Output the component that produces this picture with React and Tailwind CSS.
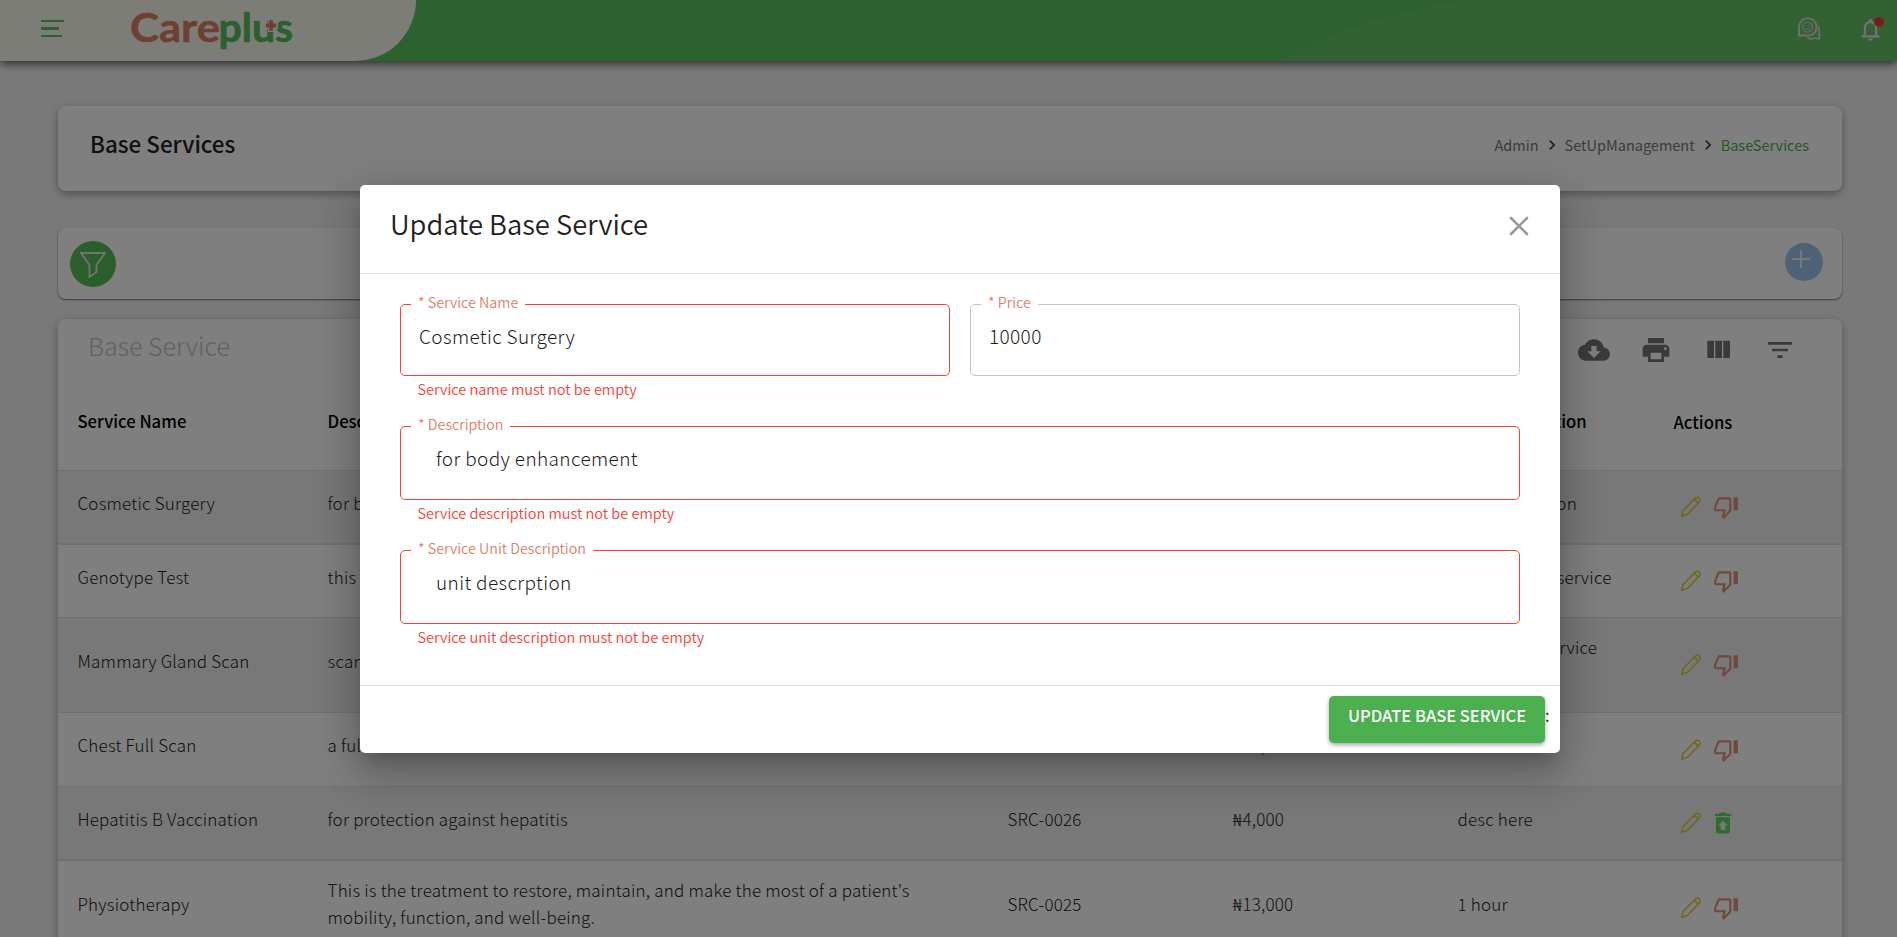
const svgBase = { xmlns: "http://www.w3.org/2000/svg", viewBox: "0 0 24 24" };

function Material({ d, className }) {
  return (
    <svg {...svgBase} className={className} fill="currentColor">
      <path d={d} />
    </svg>
  );
}

const PATHS = {
  cloud:
    "M19.35 10.04C18.67 6.59 15.64 4 12 4 9.11 4 6.6 5.64 5.35 8.04 2.34 8.36 0 10.91 0 14c0 3.31 2.69 6 6 6h13c2.76 0 5-2.24 5-5 0-2.64-2.05-4.78-4.65-4.96zM17 13l-5 5-5-5h3V9h4v4h3z",
  print:
    "M19 8H5c-1.66 0-3 1.34-3 3v6h4v4h12v-4h4v-6c0-1.66-1.34-3-3-3zm-3 11H8v-5h8v5zm3-7c-.55 0-1-.45-1-1s.45-1 1-1 1 .45 1 1-.45 1-1 1zm-1-9H6v4h12V3z",
  columns: "M10 5h5v13h-5zM4 5h5v13H4zM16 5h5v13h-5z",
  filterList: "M10 18h4v-2h-4v2zM3 6v2h18V6H3zm3 7h12v-2H6v2z",
  thumbDown:
    "M15 3H6c-.83 0-1.54.5-1.84 1.22l-3.02 7.05c-.09.23-.14.47-.14.73v2c0 1.1.9 2 2 2h6.31l-.95 4.57-.03.32c0 .41.17.79.44 1.06L9.83 23l6.59-6.59c.36-.36.58-.86.58-1.41V5c0-1.1-.9-2-2-2zm0 12l-4.34 4.34L12 14H3v-2l3-7h9v10zm4-12h4v12h-4z",
  restore: "M19 4h-3.5l-1-1h-5l-1 1H5v2h14V4zM6 7v12c0 1.1.9 2 2 2h8c1.1 0 2-.9 2-2V7H6zm8 7v4h-4v-4H8l4-4 4 4h-2z",
  bell:
    "M12 22c1.1 0 2-.9 2-2h-4c0 1.1.9 2 2 2zm6-6v-5c0-3.07-1.63-5.64-4.5-6.32V4c0-.83-.67-1.5-1.5-1.5s-1.5.67-1.5 1.5v.68C7.64 5.36 6 7.92 6 11v5l-2 2v1h16v-1l-2-2zm-2 1H8v-6c0-2.48 1.51-4.5 4-4.5s4 2.02 4 4.5v6z",
  chevron: "M10 6L8.59 7.41 13.17 12l-4.58 4.59L10 18l6-6z",
};

function Pencil() {
  return (
    <svg viewBox="0 0 22 22" className="h-[22px] w-[22px] text-[#e3c62c]" fill="none" stroke="currentColor" strokeWidth="1.4" strokeLinejoin="round">
      <path d="M1.6 20.4l1.5-5.9L14.9 2.4c1.3-1.3 3-1.5 4.3-.3 1.3 1.3 1.2 2.9-.1 4.2L7.3 18.4z" />
      <path d="M13.6 3.8c2.2.2 3.7 1.6 4.1 3.9" />
    </svg>
  );
}

function Chat() {
  return (
    <svg viewBox="0 0 24 24" className="h-6 w-6 text-[#dadada]" fill="none" stroke="currentColor" strokeWidth="2">
      <path d="M2 18.5V10a8.8 8.8 0 1 1 8.8 8.8c-1.5 0-2.6-.3-3.8-.9-1.6.8-3.2 1-5 .6z" />
      <circle cx="10.5" cy="10" r="5" strokeWidth="1.1" />
      <path d="M8.7 8.3v1.2M12.3 8.3v1.2M8.3 12.6c1-1.3 3.4-1.3 4.4 0" strokeWidth="1" />
      <path d="M21.3 9.5c1 2 1 4 1 6.5v5.5c-1.7.3-3 .1-4.400-.5-3 1.300-5.700 1-7.600-.2" strokeWidth="1.8" />
    </svg>
  );
}

function Logo() {
  return (
    <svg viewBox="0 0 164 44" className="h-11 w-[164px] overflow-visible" fontFamily="Lato, sans-serif" fontWeight="700" fontSize="39.5">
      <text x="0" y="32.5" textLength="90" lengthAdjust="spacingAndGlyphs" fill="#dc8068" stroke="#dc8068" strokeWidth="0.5">
        Care
      </text>
      <text x="88.5" y="32.5" textLength="74.5" lengthAdjust="spacingAndGlyphs" fill="#53c05c" stroke="#53c05c" strokeWidth="0.7">
        plus
      </text>
      <path d="M134 17h14M141 10v13" stroke="#fbfbef" strokeWidth="6" />
      <path d="M135.8 16.5h10.4M141 11.3v10.4" stroke="#dc8068" strokeWidth="3.8" />
    </svg>
  );
}

function Header() {
  return (
    <header className="relative flex h-[61px] overflow-hidden bg-[#5bc25f]">
      <svg className="absolute right-0 top-0 h-[61px] w-[640px]" viewBox="0 0 640 61">
        <path d="M23 61C70 33 130 12 208 0H640V61z" fill="#64c267" />
      </svg>
      <div className="relative flex h-[61px] w-[416px] items-start rounded-br-[61px] bg-[#fbfbef]">
        <div className="ml-[41px] mt-5 flex w-[23px] flex-col text-[#5bc25f]">
          <span className="h-[2px] w-[23px] bg-current" />
          <span className="mt-[5px] h-[3px] w-[18px] bg-current" />
          <span className="mt-[5px] h-[2px] w-[21px] bg-current" />
        </div>
        <div className="ml-[66px] mt-[9px]">
          <Logo />
        </div>
      </div>
      <div className="relative ml-auto flex items-start pr-[13px]">
        <div className="mt-[17px]">
          <Chat />
        </div>
        <div className="relative ml-[36px] mt-[16px] text-[#e4e4e4]">
          <Material d={PATHS.bell} className="h-[27px] w-[27px]" />
          <span className="absolute right-0 top-[1px] h-[10px] w-[10px] rounded-full bg-[#f03a36]" />
        </div>
      </div>
    </header>
  );
}

const ROWS = [
  { h: "h-[74px] border-b-2", name: "Cosmetic Surgery", desc: "for body enhancement", code: "SRC-0030", price: "₦10,000", unit: "unit descrption", action: "down" },
  { h: "h-[73px] border-b", name: "Genotype Test", desc: "this is a genotype test", code: "SRC-0029", price: "₦5,000", unit: "one unit per service", action: "down" },
  { h: "h-[95px] border-b", name: "Mammary Gland Scan", desc: "scanning of the mammary gland", code: "SRC-0028", price: "₦8,000", unit: "per unit of service rendered", action: "down" },
  { h: "h-[74px] border-b", name: "Chest Full Scan", desc: "a full scan of the chest", code: "SRC-0027", price: "₦10,000", unit: "unit", action: "down" },
  { h: "h-[74px] border-b-2", name: "Hepatitis B Vaccination", desc: "for protection against hepatitis", code: "SRC-0026", price: "₦4,000", unit: "desc here", action: "restore" },
  { h: "h-[95px] border-b", name: "Physiotherapy", desc: "This is the treatment to restore, maintain, and make the most of a patient's mobility, function, and well-being.", code: "SRC-0025", price: "₦13,000", unit: "1 hour", action: "down" },
];

const GRID = "grid grid-cols-[250px_680px_225px_225px_216px_1fr] items-center pl-[19.5px]";

function ServicesTable() {
  return (
    <section className="mt-5 rounded-lg bg-white shadow-[0_3px_8px_rgba(0,0,0,0.32)]">
      <div className="flex h-[62px] items-start justify-between pl-[30px] pr-[46px]">
        <h2 className="mt-[8px] text-[25px] leading-9 font-light text-[#c2c2c2]">Base Service</h2>
        <div className="mt-[15px] flex gap-[30px] text-[#747474]">
          <Material d={PATHS.cloud} className="h-8 w-8" />
          <Material d={PATHS.print} className="h-8 w-8" />
          <Material d={PATHS.columns} className="h-8 w-8" />
          <Material d={PATHS.filterList} className="h-8 w-8" />
        </div>
      </div>
      <div className={`${GRID} h-[90px] border-b border-[#e0e0e0] pb-[9px] text-[16.65px] font-medium text-black`}>
        <span>Service Name</span>
        <span>Description</span>
        <span>Code</span>
        <span>Price</span>
        <span>Unit Description</span>
        <span className="pt-[2px]">Actions</span>
      </div>
      {ROWS.map((row, i) => (
        <div key={row.name} className={`${GRID} ${row.h} ${i % 2 ? "" : "bg-[#f1f1f1]"} border-[#e0e0e0] text-[17px] leading-[27px] font-light tracking-[0.2px] text-[#222]`}>
          <span className="pb-[10px]">{row.name}</span>
          <span className="max-w-[610px] pb-[10px]">{row.desc}</span>
          <span className="pb-[10px]">{row.code}</span>
          <span className="pb-[10px]">{row.price}</span>
          <span className="max-w-[175px] pb-[10px]">{row.unit}</span>
          <span className="flex items-center gap-[11px] pl-[6px]">
            <Pencil />
            {row.action === "down" ? (
              <Material d={PATHS.thumbDown} className="h-[26px] w-[26px] text-[#dd927d]" />
            ) : (
              <Material d={PATHS.restore} className="-ml-1 h-[28px] w-[28px] text-[#5fd868]" />
            )}
          </span>
        </div>
      ))}
    </section>
  );
}

function Field({ label, value, error, className = "", inset = "pl-[18px]" }) {
  return (
    <div>
      <fieldset className={`rounded-[5px] border ${error ? "border-[#f44336]" : "border-[#c4c4c4]"} ${className}`}>
        <legend className="ml-[10px] px-[7px] text-[14.3px] leading-4 font-[350] text-[#dd8068]">
          <span className="relative -top-[2px]">* {label}</span>
        </legend>
        <div className={`mt-[9px] text-[19px] leading-[30px] font-light tracking-[0.37px] text-[#1c1c1c] ${inset}`}>{value}</div>
      </fieldset>
      {error && <p className="mt-[3px] pl-[17.5px] text-[14.5px] leading-5 font-[350] text-[#f44336]">{error}</p>}
    </div>
  );
}

function UpdateDialog() {
  return (
    <div className="absolute inset-0 flex justify-center bg-black/50 pl-[23px] pt-[185px]">
      <div role="dialog" className="flex h-[568px] w-[1200px] flex-col rounded-[5px] bg-white shadow-[0_11px_15px_-7px_rgba(0,0,0,0.2),0_24px_38px_3px_rgba(0,0,0,0.14),0_9px_46px_8px_rgba(0,0,0,0.12)]">
        <div className="flex h-[89px] items-start justify-between border-b border-[#e0e0e0] pl-[30px] pr-[31px]">
          <h1 className="mt-[18px] text-[27.4px] leading-10 font-[350] text-[#222]">Update Base Service</h1>
          <svg viewBox="0 0 20 20" className="mt-[31px] h-5 w-5" stroke="#999" strokeWidth="2.6" strokeLinecap="round">
            <path d="M2 2l16 16M18 2L2 18" />
          </svg>
        </div>
        <div className="h-[412px] border-b border-[#e0e0e0] px-10 pt-[22px]">
          <div className="grid h-[122px] grid-cols-2 gap-5">
            <Field label="Service Name" value="Cosmetic Surgery" error="Service name must not be empty" className="h-[80px]" />
            <Field label="Price" value="10000" className="h-[80px]" />
          </div>
          <div className="h-[124px]">
            <Field label="Description" value="for body enhancement" error="Service description must not be empty" className="h-[82px]" inset="pl-[35px]" />
          </div>
          <Field label="Service Unit Description" value="unit descrption" error="Service unit description must not be empty" className="h-[82px]" inset="pl-[35px]" />
        </div>
        <div className="flex items-start justify-end pr-[10px] pt-[10px]">
          <button className="flex h-[47px] w-[216px] items-start justify-center rounded-[5px] bg-[#4caf50] pt-[4px] text-[16.5px] leading-[30px] font-medium whitespace-nowrap text-white shadow-[0_2px_4px_rgba(0,0,0,0.35)]">
            UPDATE BASE SERVICE
          </button>
          <span className="w-[5px] pt-[4px] text-[17px] leading-[30px] text-[#222]">:</span>
        </div>
      </div>
    </div>
  );
}

export default function App() {
  return (
    <div className="relative h-[937px] w-full overflow-hidden bg-[#f3f3f4] [font-family:'Noto_Sans_CJK_SC','Noto_Sans',sans-serif]">
      <div className="shadow-[0_3px_8px_rgba(0,0,0,0.6)]">
        <Header />
      </div>
      <main className="pl-[58px] pr-[55px] pt-[45px]">
        <section className="flex h-[85px] items-start justify-between rounded-lg bg-white pl-8 pr-[33px] shadow-[0_3px_8px_rgba(0,0,0,0.35)]">
          <h1 className="mt-[19px] text-[22.4px] leading-9 font-medium text-[#222]">Base Services</h1>
          <nav className="mt-[27px] flex items-center text-[14.5px] leading-6 text-[#777]">
            <span>Admin</span>
            <Material d={PATHS.chevron} className="mx-[3px] h-5 w-5 text-[#444]" />
            <span>SetUpManagement</span>
            <Material d={PATHS.chevron} className="mx-[3px] h-5 w-5 text-[#444]" />
            <span className="text-[#4caf50]">BaseServices</span>
          </nav>
        </section>
        <section className="mt-[37px] flex h-[71px] items-start justify-between rounded-lg bg-white pl-3 pr-[19px] shadow-[0_1px_2px_rgba(0,0,0,0.55)]">
          <div className="mt-[13px] flex h-[46px] w-[46px] items-center justify-center rounded-full bg-[#55bf59]">
            <svg viewBox="0 0 26 26" className="mt-[2px] h-[26px] w-[26px]" fill="none" stroke="#e4e4e4" strokeWidth="1.8">
              <path d="M1 1h24l-8.5 12v7l-7 5V13z" />
            </svg>
          </div>
          <div className="mt-[15px] h-[38px] w-[38px] rounded-full bg-[#9bc5ea] pl-[7px] pt-[7px]">
            <svg viewBox="0 0 18 18" className="h-[18px] w-[18px]" stroke="#eee" strokeWidth="2.2" strokeLinecap="round">
              <path d="M9 0v18M0 9h18" />
            </svg>
          </div>
        </section>
        <ServicesTable />
      </main>
      <UpdateDialog />
    </div>
  );
}
